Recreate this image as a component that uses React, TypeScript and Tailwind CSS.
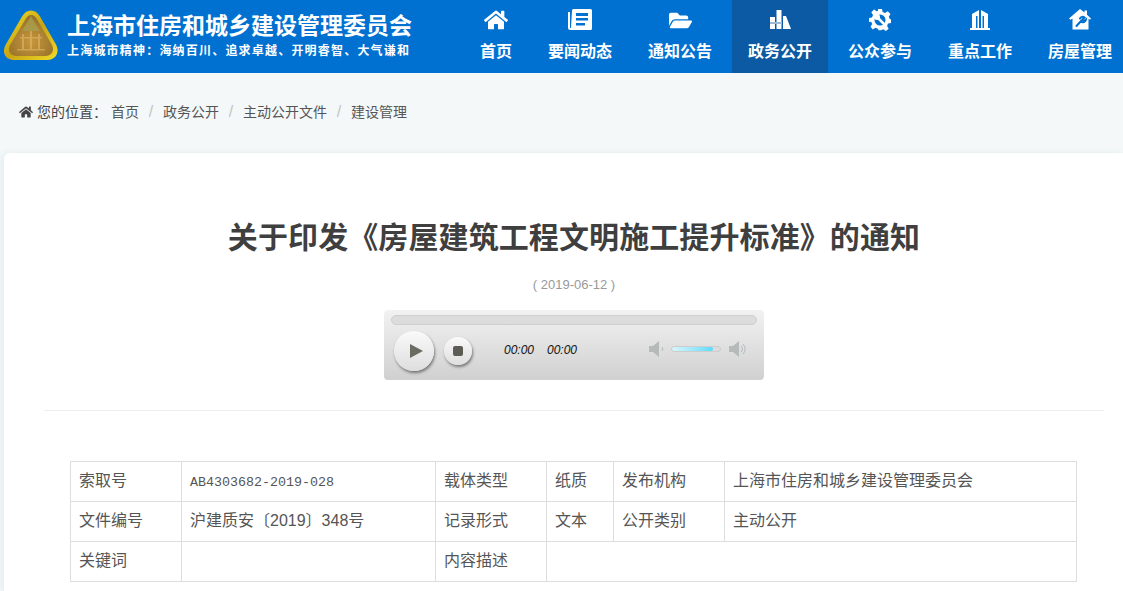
import React from "react";
import { FaHome, FaFolderOpen } from "react-icons/fa";

const CJK = "font-['Liberation_Sans','Noto_Sans_CJK_SC',sans-serif]";

const NewsIcon = () => (
  <svg width="24" height="22" viewBox="0 0 24 22" fill="#fff">
    <path d="M4 1.500A1.500 1.500 0 0 1 5.500 0h17A1.500 1.500 0 0 1 24 1.500v18a1.500 1.500 0 0 1-1.500 1.500H2.500A2.500 2.500 0 0 1 0 18.500V3h2v15.500a.5.5 0 0 0 1 0z" />
    <path fill="#0071d1" d="M8 4h12v3H8zM8 9h12v2.500H8zM8 14h9v2.500H8z" />
  </svg>
);

const GovIcon = () => (
  <svg width="21" height="20" viewBox="0 0 21 20" fill="#fff">
    <path d="M0 7h5v12H0z" />
    <path d="M6.500 0h5v19h-5z" />
    <path d="M13 6h3l5 13h-8z" />
    <path fill="#9fb8d6" d="M0 12h12v2H0z" />
  </svg>
);

const GearIcon = () => (
  <svg width="22" height="22" viewBox="0 0 22 22">
    <path fill="#fff" d="M9 0h4l.6 3 2.500 1 2.600-1.700 2.800 2.800L19.800 7.800l1 2.200 1.200.500v3.500l-3 .6-1 2.500 1.700 2.600-2.800 2.300-2.600-1.700-2.300 1H9.500l-.6-1.500-2.500-1-2.600 1.700-2.300-2.800 1.700-2.600-1-2.300L0 13V9l3-.6 1-2.500L2.300 3.300l2.800-2.800L7.700 2.200 9 1.700z" />
    <circle cx="11" cy="11" r="5.500" fill="#0071d1" />
    <path stroke="#fff" strokeWidth="2.500" strokeLinecap="round" d="M8 8l9 9" />
    <circle cx="8" cy="8" r="3" fill="#fff" />
  </svg>
);

const BuildingIcon = () => (
  <svg width="20" height="20" viewBox="0 0 20 20" fill="#fff">
    <path d="M2 4l7-4v18H2zM11 0l7 4v14h-7z" />
    <path d="M0 18h20v2H0z" />
    <path fill="#0071d1" d="M6 6h1.500v12H6zM12.500 6H14v12h-1.500z" />
  </svg>
);

const HouseToolIcon = () => (
  <svg width="22" height="22" viewBox="0 0 22 22">
    <path fill="#fff" d="M11 0l4.500 3.600V1.500h2.500v4.200L22 9.500l-1 1.200-1.500-1.200V20.500H3.500V9.500L1.500 10.700 0 9.500z" />
    <path stroke="#0071d1" strokeWidth="2" fill="none" strokeLinecap="round" d="M7.500 17l5-5.500M11 9.500a3 3 0 0 1 4.500-1l-2 2 1.500 1.500 2-1.500a3 3 0 0 1-4 2.500" />
  </svg>
);

const Logo = () => (
  <svg width="56" height="52" viewBox="0 0 56 52" className="mb-[2px] shrink-0">
    <defs>
      <linearGradient id="rim" x1="0" y1="0" x2="1" y2="1">
        <stop offset="0" stopColor="#f2e22a" />
        <stop offset="0.5" stopColor="#c9a412" />
        <stop offset="1" stopColor="#f0dc28" />
      </linearGradient>
      <radialGradient id="core" cx="0.5" cy="0.65" r="0.6">
        <stop offset="0" stopColor="#c9963c" />
        <stop offset="1" stopColor="#96722a" />
      </radialGradient>
    </defs>
    <path d="M28 0.500c4 0 6.500 2 9 6l16 28c3.500 7 1 15-8.500 15.500h-34C1.500 49.500-1 42 2.500 35L19 6.500C21.500 2.500 24 0.500 28 0.500z" fill="url(#rim)" />
    <path d="M28 5c3 0 4.500 1.500 6.500 5L49 35c2.500 5 .5 10.500-6 11H13c-6.500-.5-8.500-6-6-11l15-25c2-3.500 3.500-5 6-5z" fill="url(#core)" />
    <path d="M28 6l9 15H19z" fill="#a8a050" opacity="0.75" />
    <path d="M17 27h22v1.500H17zM19 24h2v15h-2zM27 21h2v18h-2zM35 24h2v15h-2zM14 39h28v1.500H14z" fill="#e0be70" opacity="0.55" />
  </svg>
);

const navItems: { label: string; icon: React.ReactNode; active?: boolean; first?: boolean }[] = [
  { label: "首页", icon: <FaHome size={24} color="#fff" />, first: true },
  { label: "要闻动态", icon: <NewsIcon /> },
  { label: "通知公告", icon: <FaFolderOpen size={23} color="#fff" /> },
  { label: "政务公开", icon: <GovIcon />, active: true },
  { label: "公众参与", icon: <GearIcon /> },
  { label: "重点工作", icon: <BuildingIcon /> },
  { label: "房屋管理", icon: <HouseToolIcon /> },
];

const crumbs = ["首页", "政务公开", "主动公开文件", "建设管理"];

const cell = "border border-[#dddddd] px-2 pb-[2px] align-middle font-normal text-left";

const Player = () => (
  <div className="mx-auto flex h-[70px] w-[380px] flex-col rounded bg-gradient-to-b from-[#f2f2f2] to-[#d0d0d0] px-[7px] pt-[5px]">
    <div className="h-[10px] rounded-full border border-[#cfcfcf] bg-[#dcdcdc]" />
    <div className="mt-[6px] flex items-center">
      <div className="ml-[3px] flex h-[40px] w-[40px] items-center justify-center rounded-full bg-gradient-to-b from-[#fafafa] to-[#dedede] shadow-[1px_2px_3px_rgba(0,0,0,0.45)]">
        <div className="ml-1 h-0 w-0 border-y-[7px] border-l-[13px] border-y-transparent border-l-[#6b6b62]" />
      </div>
      <div className="ml-[10px] flex h-[28px] w-[28px] items-center justify-center rounded-full bg-gradient-to-b from-[#fafafa] to-[#dedede] shadow-[1px_2px_3px_rgba(0,0,0,0.45)]">
        <div className="h-[10px] w-[10px] rounded-[2px] bg-[#5c5c55]" />
      </div>
      <span className="mb-[2px] ml-[32px] w-[43px] text-xs italic text-[#111] font-['Liberation_Sans',sans-serif]">00:00</span>
      <span className="mb-[2px] text-xs italic text-[#111] font-['Liberation_Sans',sans-serif]">00:00</span>
      <svg className="mb-[4px] ml-[71px]" width="18" height="18" viewBox="0 0 18 18">
        <path d="M1 6h4l6-5v16l-6-5H1z" fill="#b5baba" />
        <path d="M14 7a3 3 0 0 1 0 4" stroke="#b5baba" fill="none" strokeWidth="1" />
      </svg>
      <div className="mb-[4px] ml-[5px] h-[6px] w-[50px] overflow-hidden rounded-full border border-[#cdcdcd] bg-[#dcdcdc]">
        <div className="h-full w-[41px] rounded-full bg-gradient-to-r from-[#d5f5fb] to-[#58dcfa]" />
      </div>
      <svg className="mb-[4px] ml-[7px]" width="20" height="18" viewBox="0 0 20 18">
        <path d="M1 6h4l6-5v16l-6-5H1z" fill="#b5baba" />
        <path d="M13 6a4 4 0 0 1 0 6M15 4a7 7 0 0 1 0 10" stroke="#b5baba" fill="none" strokeWidth="1" />
      </svg>
    </div>
  </div>
);

export default function App() {
  return (
    <div className={`h-[591px] w-[1123px] overflow-hidden bg-[#f4f8f9] ${CJK}`}>
      <header className="flex h-[73px] overflow-hidden bg-[#0071d1] text-white">
        <div className="flex w-[464px] shrink-0 items-center pl-[3px]">
          <Logo />
          <div className="ml-[8px] mb-[3px]">
            <div className="text-[23px] font-bold leading-[28px] text-white">上海市住房和城乡建设管理委员会</div>
            <div className="mt-[3px] whitespace-nowrap text-[12px] font-bold leading-[16px] tracking-[1.200px]">上海城市精神：海纳百川、追求卓越、开明睿智、大气谦和</div>
          </div>
        </div>
        <nav className="flex shrink-0 gap-1">
          {navItems.map((item) => (
            <div
              key={item.label}
              className={`flex shrink-0 flex-col items-center ${item.first ? "w-[64px]" : "w-[96px]"} ${item.active ? "bg-[#0b5aa3]" : ""}`}
            >
              <div className="flex h-[36px] items-center pt-[4px]">{item.icon}</div>
              <div className="mt-[4px] whitespace-nowrap text-[16px] font-bold leading-[24px]">{item.label}</div>
            </div>
          ))}
        </nav>
      </header>

      <div className="flex h-[80px] items-center pb-[2px] pl-[19px] text-[14px] text-[#555]">
        <FaHome size={14} color="#444" />
        <span className="ml-[4px] text-[#444]">您的位置：</span>
        {crumbs.map((c, i) => (
          <React.Fragment key={c}>
            {i > 0 && <span className="w-[24px] text-center text-[16px] text-[#c4c4c4]">/</span>}
            <span className={i === 0 ? "ml-[4px]" : ""}>{c}</span>
          </React.Fragment>
        ))}
      </div>

      <main className="ml-[4px] h-[438px] rounded-tl-md bg-white pl-[40px] pr-[19px] shadow-[-2px_0_6px_rgba(200,220,220,0.4)]">
        <h1 className="pt-[65px] text-center text-[30px] font-bold leading-[40px] tracking-[0.1px] text-[#3f3f3f]">
          关于印发《房屋建筑工程文明施工提升标准》的通知
        </h1>
        <p className="mt-[18px] text-center text-[13px] leading-[18px] text-[#999]">( 2019-06-12 )</p>
        <div className="mt-[16px]">
          <Player />
        </div>
        <div className="mt-[30px] border-t border-[#eeeeee]" />
        <table className="ml-[26px] mt-[50px] w-[1006px] table-fixed border-collapse text-[16px] text-[#555]">
          <colgroup>
            <col className="w-[111px]" />
            <col className="w-[254px]" />
            <col className="w-[111px]" />
            <col className="w-[67px]" />
            <col className="w-[111px]" />
            <col className="w-[352px]" />
          </colgroup>
          <tbody>
            <tr className="h-[40px]">
              <td className={cell}>索取号</td>
              <td className={cell}>
                <span className="font-['Liberation_Mono',monospace] text-[13.333px]">AB4303682-2019-028</span>
              </td>
              <td className={cell}>载体类型</td>
              <td className={cell}>纸质</td>
              <td className={cell}>发布机构</td>
              <td className={cell}>上海市住房和城乡建设管理委员会</td>
            </tr>
            <tr className="h-[40px]">
              <td className={cell}>文件编号</td>
              <td className={cell}>沪建质安〔2019〕348号</td>
              <td className={cell}>记录形式</td>
              <td className={cell}>文本</td>
              <td className={cell}>公开类别</td>
              <td className={cell}>主动公开</td>
            </tr>
            <tr className="h-[40px]">
              <td className={cell}>关键词</td>
              <td className={cell}></td>
              <td className={cell}>内容描述</td>
              <td className={cell} colSpan={3}></td>
            </tr>
          </tbody>
        </table>
      </main>
    </div>
  );
}
